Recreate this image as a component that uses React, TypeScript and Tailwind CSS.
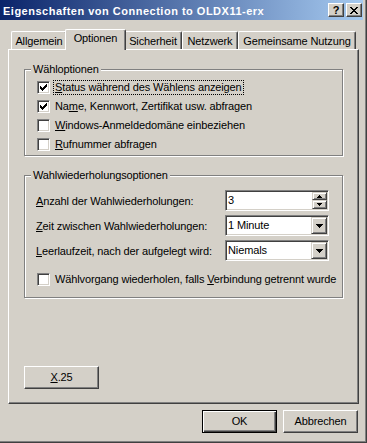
import React from "react";

const FONT = "font-['Liberation_Sans',Arial,sans-serif]";

function CheckMark() {
  return (
    <svg width="7" height="7" viewBox="0 0 7 7" shapeRendering="crispEdges">
      <path
        fill="#000"
        d="M6 0h1v1h-1z M5 1h2v1h-2z M0 2h1v1h-1z M4 2h3v1h-3z M0 3h2v1h-2z M3 3h3v1h-3z M0 4h5v1h-5z M1 5h3v1h-3z M2 6h1v1h-1z"
      />
    </svg>
  );
}

function Check({ checked }: { checked?: boolean }) {
  return (
    <span className="w-[13px] h-[13px] shrink-0 bg-white border border-t-[#808080] border-l-[#808080] border-r-white border-b-white shadow-[inset_1px_1px_0_#404040,inset_-1px_-1px_0_#D4D0C8] flex items-center justify-center">
      {checked && <CheckMark />}
    </span>
  );
}

function DownArrow() {
  return (
    <svg width="7" height="4" viewBox="0 0 7 4" shapeRendering="crispEdges">
      <path fill="#000" d="M0 0h7v1h-7z M1 1h5v1h-5z M2 2h3v1h-3z M3 3h1v1h-1z" />
    </svg>
  );
}

function SmallArrow({ up }: { up?: boolean }) {
  return (
    <svg width="5" height="3" viewBox="0 0 5 3" shapeRendering="crispEdges">
      {up ? (
        <path fill="#000" d="M2 0h1v1h-1z M1 1h3v1h-3z M0 2h5v1h-5z" />
      ) : (
        <path fill="#000" d="M0 0h5v1h-5z M1 1h3v1h-3z M2 2h1v1h-1z" />
      )}
    </svg>
  );
}

const raisedInner =
  "bg-[#D4D0C8] border border-t-[#D4D0C8] border-l-[#D4D0C8] border-r-[#404040] border-b-[#404040] shadow-[inset_1px_1px_0_#fff,inset_-1px_-1px_0_#808080]";

const sunken =
  "bg-white border border-t-[#808080] border-l-[#808080] border-r-white border-b-white shadow-[inset_1px_1px_0_#404040,inset_-1px_-1px_0_#D4D0C8] p-[1px]";

function Combo({ value }: { value: string }) {
  return (
    <div className={`w-[104px] h-[21px] flex ${sunken}`}>
      <div className="flex-1 flex items-center pl-[1px]">{value}</div>
      <div className={`w-[16px] h-full flex items-center justify-center ${raisedInner}`}>
        <DownArrow />
      </div>
    </div>
  );
}

function Spin({ value }: { value: string }) {
  return (
    <div className={`w-[104px] h-[21px] flex ${sunken}`}>
      <div className="flex-1 flex items-center pl-[1px]">{value}</div>
      <div className="w-[15px] h-full flex flex-col">
        <div className={`h-[8px] flex items-center justify-center ${raisedInner}`}>
          <SmallArrow up />
        </div>
        <div className={`flex-1 flex items-center justify-center ${raisedInner}`}>
          <SmallArrow />
        </div>
      </div>
    </div>
  );
}

function Button({
  children,
  isDefault,
}: {
  children: React.ReactNode;
  isDefault?: boolean;
}) {
  const cls = isDefault
    ? "border border-black shadow-[inset_1px_1px_0_#fff,inset_-1px_-1px_0_#404040,inset_-2px_-2px_0_#808080]"
    : "border border-t-white border-l-white border-r-[#404040] border-b-[#404040] shadow-[inset_-1px_-1px_0_#808080]";
  return (
    <div
      className={`w-[75px] h-[23px] bg-[#D4D0C8] flex items-center justify-center ${cls}`}
    >
      {children}
    </div>
  );
}

function Tab({ children, w }: { children: React.ReactNode; w: string }) {
  return (
    <div
      className={`${w} h-[18px] shrink-0 rounded-t-[2px] border-t border-l border-r border-t-white border-l-white border-r-[#404040] shadow-[inset_-1px_0_0_#808080] flex items-center justify-center pt-[1px] whitespace-nowrap`}
    >
      {children}
    </div>
  );
}

function CapButton({ children }: { children: React.ReactNode }) {
  return (
    <div className="w-[16px] h-[14px] bg-[#D4D0C8] border border-t-white border-l-white border-r-[#404040] border-b-[#404040] shadow-[inset_-1px_-1px_0_#808080] flex items-center justify-center">
      {children}
    </div>
  );
}

function CheckRow({
  checked,
  focus,
  children,
}: {
  checked?: boolean;
  focus?: boolean;
  children: React.ReactNode;
}) {
  return (
    <div className="h-[19px] flex items-center">
      <Check checked={checked} />
      <span
        className={`ml-[3px] px-[1px] border whitespace-nowrap ${
          focus ? "border-dotted border-black" : "border-transparent"
        }`}
      >
        {children}
      </span>
    </div>
  );
}

export default function App() {
  return (
    <div
      className={`w-[367px] h-[443px] bg-[#D4D0C8] border-r border-b border-[#404040] text-[11px] leading-[13px] tracking-[-0.12px] text-black ${FONT}`}
    >
      <div className="h-full border-r border-b border-[#808080] flex flex-col">
        {/* Title bar */}
        <div className="h-[20px] mr-[2px] bg-[linear-gradient(to_right,#0A246A,#A6CAF0)] flex items-center pl-[3px] pr-[1px]">
          <span className="flex-1 font-bold text-white tracking-[0.5px] whitespace-nowrap pt-[2px]">
            Eigenschaften von Connection to OLDX11-erx
          </span>
          <CapButton>
            <span className="font-bold text-[11px] leading-[11px] text-black">?</span>
          </CapButton>
          <div className="w-[2px]" />
          <CapButton>
            <svg width="8" height="7" viewBox="0 0 8 7" shapeRendering="crispEdges">
              <path
                fill="#000"
                d="M0 0h2v1h-2z M6 0h2v1h-2z M1 1h2v1h-2z M5 1h2v1h-2z M2 2h4v1h-4z M3 3h2v1h-2z M2 4h4v1h-4z M1 5h2v1h-2z M5 5h2v1h-2z M0 6h2v1h-2z M6 6h2v1h-2z"
              />
            </svg>
          </CapButton>
        </div>

        {/* Tabs */}
        <div className="mt-[9px] h-[20px] pl-[11px] flex items-end">
          <Tab w="w-[56px]">Allgemein</Tab>
          <div className="relative z-10 -mx-[2px] -mb-[1px] w-[61px] h-[21px] shrink-0 bg-[#D4D0C8] rounded-t-[2px] border-t border-l border-r border-t-white border-l-white border-r-[#404040] shadow-[inset_-1px_0_0_#808080] flex justify-center pt-[2px]">
            Optionen
          </div>
          <Tab w="w-[58px]">Sicherheit</Tab>
          <Tab w="w-[56px]">Netzwerk</Tab>
          <Tab w="w-[118px]">Gemeinsame Nutzung</Tab>
        </div>

        {/* Panel */}
        <div className="ml-[8px] w-[351px] h-[355px] shrink-0 border border-t-white border-l-white border-r-[#404040] border-b-[#404040] shadow-[inset_-1px_-1px_0_#808080] pl-[15px] pt-[13px] flex flex-col items-start">
          <fieldset className="w-[319px] border border-[#808080] shadow-[inset_1px_1px_0_#fff,1px_1px_0_#fff]">
            <legend className="ml-[6px] px-[2px] bg-[#D4D0C8]">Wähloptionen</legend>
            <div className="pl-[12px] pt-[2px] pb-[1px] flex flex-col">
              <CheckRow checked focus>
                <u>S</u>tatus während des Wählens anzeigen
              </CheckRow>
              <CheckRow checked>
                Na<u>m</u>e, Kennwort, Zertifikat usw. abfragen
              </CheckRow>
              <CheckRow>
                <u>W</u>indows-Anmeldedomäne einbeziehen
              </CheckRow>
              <CheckRow>
                <u>R</u>ufnummer abfragen
              </CheckRow>
            </div>
          </fieldset>

          <fieldset className="mt-[13px] w-[319px] border border-[#808080] shadow-[inset_1px_1px_0_#fff,1px_1px_0_#fff]">
            <legend className="ml-[6px] px-[2px] bg-[#D4D0C8]">
              Wahlwiederholungsoptionen
            </legend>
            <div className="pl-[11px] pt-[8px] pb-[8px] flex flex-col">
              <div className="flex items-center">
                <div className="w-[189px] whitespace-nowrap pt-[2px]">
                  <u>A</u>nzahl der Wahlwiederholungen:
                </div>
                <Spin value="3" />
              </div>
              <div className="mt-[4px] flex items-center">
                <div className="w-[189px] whitespace-nowrap pt-[1px]">
                  <u>Z</u>eit zwischen Wahlwiederholungen:
                </div>
                <Combo value="1 Minute" />
              </div>
              <div className="mt-[4px] flex items-center">
                <div className="w-[189px] whitespace-nowrap pt-[1px]">
                  <u>L</u>eerlaufzeit, nach der aufgelegt wird:
                </div>
                <Combo value="Niemals" />
              </div>
              <div className="mt-[9px] ml-[1px]">
                <CheckRow>
                  Wählvorgang wiederholen, falls <u>V</u>erbindung getrennt wurde
                </CheckRow>
              </div>
            </div>
          </fieldset>

          <div className="mt-[68px]">
            <Button>
              <span>
                <u>X</u>.25
              </span>
            </Button>
          </div>
        </div>

        {/* Bottom buttons */}
        <div className="mt-[6px] mr-[7px] flex justify-end gap-[6px]">
          <Button isDefault>OK</Button>
          <Button>Abbrechen</Button>
        </div>
      </div>
    </div>
  );
}
